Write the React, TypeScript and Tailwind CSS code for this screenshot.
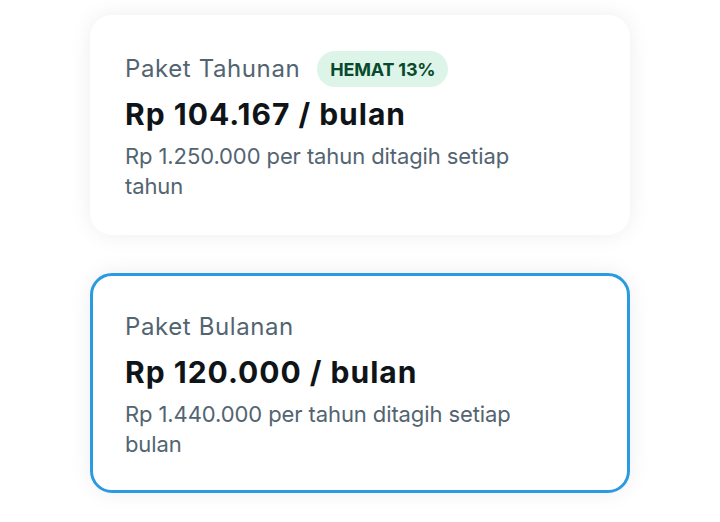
import React from "react";

const font = { fontFamily: "Inter, 'Noto Sans', sans-serif" };

function Card({
  title,
  badge,
  price,
  sub,
  selected,
}: {
  title: string;
  badge?: string;
  price: string;
  sub: string;
  selected?: boolean;
}) {
  return (
    <div
      className={`w-[540px] h-[220px] rounded-[22px] bg-white px-[32px] pt-[33px] border-[3px] shadow-[0_0_22px_rgba(0,0,0,0.07)] ${
        selected ? "border-[#2a9be2]" : "border-white"
      }`}
    >
      <div className="flex items-center h-[36px] gap-[17px]">
        <span className="text-[24px] text-[#536471] leading-[36px] tracking-[0.6px]">{title}</span>
        {badge && (
          <span className="h-[36px] px-[13px] rounded-full bg-[#dcf5e8] text-[#0a4a2c] text-[18px] font-bold flex items-center tracking-[-0.2px]">
            {badge}
          </span>
        )}
      </div>
      <div className="mt-[9px] text-[30px] font-bold leading-[36px] text-[#0f1419] tracking-[1px]">{price}</div>
      <div className="mt-[9px] text-[22px] leading-[30px] text-[#536471] max-w-[400px] tracking-[-0.1px]">{sub}</div>
    </div>
  );
}

export default function App() {
  return (
    <div className="w-[720px] h-[522px] bg-white flex flex-col items-center pt-[15px] gap-[38px]" style={font}>
      <Card
        title="Paket Tahunan"
        badge="HEMAT 13%"
        price="Rp 104.167 / bulan"
        sub="Rp 1.250.000 per tahun ditagih setiap tahun"
      />
      <Card
        title="Paket Bulanan"
        price="Rp 120.000 / bulan"
        sub="Rp 1.440.000 per tahun ditagih setiap bulan"
        selected
      />
    </div>
  );
}
